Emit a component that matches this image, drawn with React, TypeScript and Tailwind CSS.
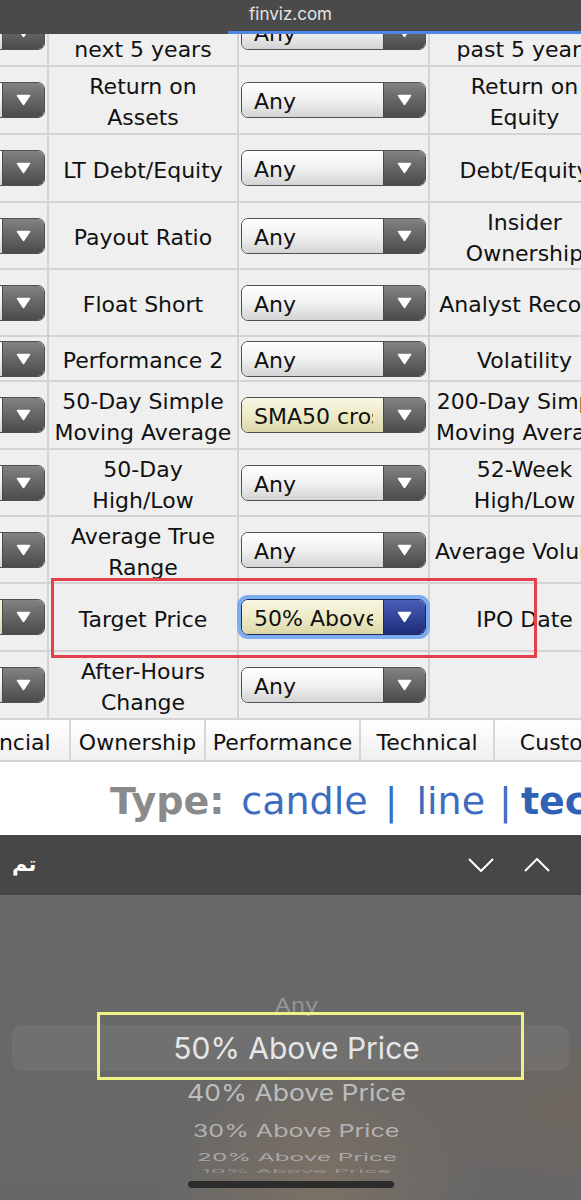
type Tone = "plain" | "set" | "focus";

type Row = {
  h: string;
  c0: Tone;
  l1: string[];
  s2: string;
  t2: Tone;
  l3: string[];
};

const rows: Row[] = [
  { h: "h-[66px]", c0: "plain", l1: ["EPS growth", "next 5 years"], s2: "Any", t2: "plain", l3: ["EPS growth", "past 5 years"] },
  { h: "h-[66px]", c0: "plain", l1: ["Return on", "Assets"], s2: "Any", t2: "plain", l3: ["Return on", "Equity"] },
  { h: "h-[66px]", c0: "plain", l1: ["LT Debt/Equity"], s2: "Any", t2: "plain", l3: ["Debt/Equity"] },
  { h: "h-[65px]", c0: "plain", l1: ["Payout Ratio"], s2: "Any", t2: "plain", l3: ["Insider", "Ownership"] },
  { h: "h-[65px]", c0: "plain", l1: ["Float Short"], s2: "Any", t2: "plain", l3: ["Analyst Recom."] },
  { h: "h-[43px]", c0: "plain", l1: ["Performance 2"], s2: "Any", t2: "plain", l3: ["Volatility"] },
  { h: "h-[66px]", c0: "plain", l1: ["50-Day Simple", "Moving Average"], s2: "SMA50 crossed SMA200", t2: "set", l3: ["200-Day Simple", "Moving Average"] },
  { h: "h-[65px]", c0: "plain", l1: ["50-Day", "High/Low"], s2: "Any", t2: "plain", l3: ["52-Week", "High/Low"] },
  { h: "h-[65px]", c0: "plain", l1: ["Average True", "Range"], s2: "Any", t2: "plain", l3: ["Average Volume"] },
  { h: "h-[66px]", c0: "set", l1: ["Target Price"], s2: "50% Above Price", t2: "focus", l3: ["IPO Date"] },
  { h: "h-[66px]", c0: "plain", l1: ["After-Hours", "Change"], s2: "Any", t2: "plain", l3: [] },
];

const tabs = [
  { name: "Financial", w: "w-[135px]" },
  { name: "Ownership", w: "w-[135px]" },
  { name: "Performance", w: "w-[155px]" },
  { name: "Technical", w: "w-[134px]" },
  { name: "Custom", w: "w-[136px]" },
];

function Triangle() {
  return (
    <svg width="15" height="12" viewBox="0 0 15 12">
      <path d="M1.5 1.5h12l-6 9z" fill="#fff" stroke="#fff" strokeWidth="1.5" strokeLinejoin="round" />
    </svg>
  );
}

function Select({ text, tone }: { text: string; tone: Tone }) {
  const frame =
    tone === "focus"
      ? "border-[#1d2868] ring-4 ring-[#7badf0]"
      : "border-[#505050]";
  const left =
    tone === "plain"
      ? "bg-linear-to-b from-white via-[#f1f1f1] to-[#d4d4d4]"
      : "bg-linear-to-b from-[#f8f6e2] via-[#eeebc9] to-[#dcd7a6]";
  const arrow =
    tone === "focus"
      ? "bg-linear-to-b from-[#4a5fb8] to-[#1e2b78] border-[#1d2868]"
      : "bg-linear-to-b from-[#828282] to-[#4b4b4b] border-[#4a4a4a]";
  return (
    <div className={`flex h-[36px] w-[185px] shrink-0 overflow-hidden rounded-[7px] border ${frame}`}>
      <div className={`flex min-w-0 flex-1 items-center pl-3 pr-[10px] ${left}`}>
        <span className="block translate-y-[2px] overflow-hidden whitespace-nowrap text-[22px] leading-none text-[#111]">{text}</span>
      </div>
      <div className={`flex w-[42px] items-center justify-center border-l ${arrow}`}>
        <Triangle />
      </div>
    </div>
  );
}

function Label({ lines }: { lines: string[] }) {
  return (
    <div className="translate-y-[2px] whitespace-nowrap text-center text-[22px] leading-[31px] text-[#111]">
      {lines.map((l) => (
        <div key={l}>{l}</div>
      ))}
    </div>
  );
}

export default function App() {
  return (
    <div className="h-[1200px] w-[581px] overflow-hidden bg-white font-['DejaVu_Sans',sans-serif]">
      {/* Safari address strip */}
      <div className="relative flex h-[34px] items-center justify-center bg-[#4a4a4a] pb-[5px]">
        <span className="font-['Inter',sans-serif] text-[17px] text-[#e4e4e4]">finviz.com</span>
        <div className="absolute bottom-0 left-[228px] right-0 h-[3px] bg-[#4f86e6]" />
      </div>

      {/* Screener filter table */}
      <div className="relative h-[686px] overflow-hidden">
        <div className="-ml-[143px] -mt-[35px] flex w-[762px] flex-col gap-y-[2px] bg-[#d3d3d3] pb-[2px]">
          {rows.map((r, i) => (
            <div key={i} className={`grid grid-cols-[190px_188px_189px_189px] gap-x-[2px] ${r.h}`}>
              <div className="flex items-center justify-center bg-[#efefef]">
                <Select text="Any" tone={r.c0} />
              </div>
              <div className="flex items-center justify-center bg-[#efefef]">
                <Label lines={r.l1} />
              </div>
              <div className="flex items-center justify-center bg-[#efefef]">
                <Select text={r.s2} tone={r.t2} />
              </div>
              <div className="flex items-center justify-center bg-[#efefef]">
                <Label lines={r.l3} />
              </div>
            </div>
          ))}
        </div>
        <div className="absolute left-[51px] top-[544px] h-[80px] w-[486px] border-[3px] border-[#e2414b]" />
      </div>

      {/* Tabs */}
      <div className="flex h-[42px] border-b-2 border-[#d2d2d2]">
        <div className="-ml-[64px] flex">
          {tabs.map((t) => (
            <div
              key={t.name}
              className={`flex shrink-0 items-center justify-center border-r-2 border-[#d6d6d6] bg-linear-to-b from-white to-[#efefef] pt-[4px] text-[22px] text-[#111] ${t.w}`}
            >
              {t.name}
            </div>
          ))}
        </div>
      </div>

      {/* Chart type */}
      <div className="flex h-[73px] items-center whitespace-nowrap pl-[110px] pt-[5px] text-[38px] leading-none">
        <span className="font-bold text-[#8a8a8a]">Type:</span>
        <span className="ml-[17px] text-[#3b6cbf]">candle</span>
        <span className="ml-[17px] text-[#3b6cbf]">|</span>
        <span className="ml-[19px] text-[#3b6cbf]">line</span>
        <span className="ml-[14px] text-[#3b6cbf]">|</span>
        <span className="ml-[9px] font-bold text-[#2f62b5]">technical</span>
      </div>

      {/* Keyboard accessory bar */}
      <div className="flex h-[60px] items-center justify-between bg-[#474747] pl-[12px] pr-[31px]">
        <span className="text-[21px] font-bold text-white" dir="rtl">تم</span>
        <div className="flex items-center gap-[30px]">
          <svg width="26" height="14" viewBox="0 0 26 14">
            <path d="M1 1l12 12 12-12" fill="none" stroke="#fff" strokeWidth="2" />
          </svg>
          <svg width="26" height="14" viewBox="0 0 26 14">
            <path d="M1 13l12-12 12 12" fill="none" stroke="#fff" strokeWidth="2" />
          </svg>
        </div>
      </div>

      {/* Picker wheel */}
      <div className="relative h-[305px] overflow-hidden bg-[radial-gradient(ellipse_at_55%_95%,#7c7064_0%,transparent_35%),radial-gradient(ellipse_at_100%_70%,#6e6660_0%,transparent_30%),linear-gradient(#696969,#676767)] font-['Inter',sans-serif]">
        <div className="absolute left-[12px] right-[12px] top-[130px] h-[46px] rounded-[10px] bg-white/5" />
        <div className="relative flex flex-col items-center pl-[12px] pt-[96px]">
          <div className="flex h-[30px] items-center">
            <span className="scale-y-[0.8] text-[24px] text-[#959595]">Any</span>
          </div>
          <div className="flex h-[54px] items-center">
            <span className="text-[30px] text-[#e6e6e6]">50% Above Price</span>
          </div>
          <div className="flex h-[36px] items-center">
            <span className="scale-y-[0.88] text-[26.5px] text-[#bdbdbd]">40% Above Price</span>
          </div>
          <div className="flex h-[40px] items-center">
            <span className="scale-x-[0.93] scale-y-[0.62] text-[27px] text-[#b3b3b3]">30% Above Price</span>
          </div>
          <div className="flex h-[12px] items-center">
            <span className="scale-x-[0.9] scale-y-[0.4] text-[27px] text-[#a8a8a8]">20% Above Price</span>
          </div>
          <div className="flex h-[16px] items-center">
            <span className="scale-x-[0.88] scale-y-[0.2] text-[27px] text-[#949494]">10% Above Price</span>
          </div>
        </div>
        <div className="mx-auto mt-[2px] h-[7px] w-[206px] rounded-full bg-[#2c2c2c]" />
        <div className="absolute left-[97px] top-[117px] h-[68px] w-[427px] border-[3px] border-[#f2f284]" />
      </div>
    </div>
  );
}
